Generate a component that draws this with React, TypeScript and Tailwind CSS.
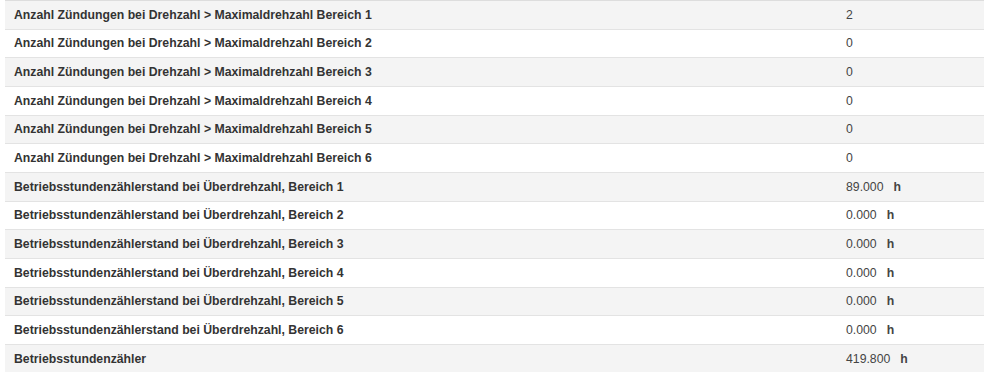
const rows: { label: string; value: string; unit?: string }[] = [
  { label: "Anzahl Zündungen bei Drehzahl > Maximaldrehzahl Bereich 1", value: "2" },
  { label: "Anzahl Zündungen bei Drehzahl > Maximaldrehzahl Bereich 2", value: "0" },
  { label: "Anzahl Zündungen bei Drehzahl > Maximaldrehzahl Bereich 3", value: "0" },
  { label: "Anzahl Zündungen bei Drehzahl > Maximaldrehzahl Bereich 4", value: "0" },
  { label: "Anzahl Zündungen bei Drehzahl > Maximaldrehzahl Bereich 5", value: "0" },
  { label: "Anzahl Zündungen bei Drehzahl > Maximaldrehzahl Bereich 6", value: "0" },
  { label: "Betriebsstundenzählerstand bei Überdrehzahl, Bereich 1", value: "89.000", unit: "h" },
  { label: "Betriebsstundenzählerstand bei Überdrehzahl, Bereich 2", value: "0.000", unit: "h" },
  { label: "Betriebsstundenzählerstand bei Überdrehzahl, Bereich 3", value: "0.000", unit: "h" },
  { label: "Betriebsstundenzählerstand bei Überdrehzahl, Bereich 4", value: "0.000", unit: "h" },
  { label: "Betriebsstundenzählerstand bei Überdrehzahl, Bereich 5", value: "0.000", unit: "h" },
  { label: "Betriebsstundenzählerstand bei Überdrehzahl, Bereich 6", value: "0.000", unit: "h" },
  { label: "Betriebsstundenzähler", value: "419.800", unit: "h" },
];

const App = () => {
  return (
    <div className="w-[985px] h-[372px] overflow-hidden bg-white pl-[5px] font-['Liberation_Sans',Arial,sans-serif] text-[12.25px] text-[#333]">
      <div className="w-[979px] border-t border-[#dddddd]">
        {rows.map((r, i) => (
          <div
            key={i}
            className={`flex items-center h-[28.67px] border-b border-[#e3e3e3] ${i % 2 === 0 ? "bg-[#f4f4f4]" : "bg-white"}`}
          >
            <div className="w-[833px] pl-[9px] font-bold">{r.label}</div>
            <div className="pl-[8px] text-[#444]">
              {r.value}
              {r.unit && <span className="ml-[10px] font-bold text-[#444]">{r.unit}</span>}
            </div>
          </div>
        ))}
      </div>
    </div>
  );
};

export default App;
